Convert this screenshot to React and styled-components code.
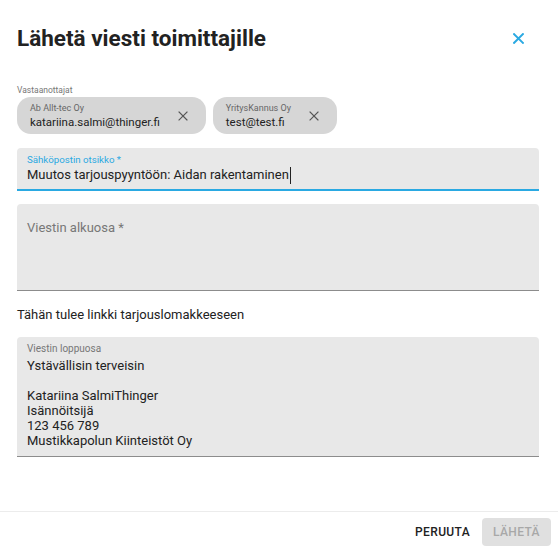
import React from 'react';
import styled, { createGlobalStyle } from 'styled-components';

const Global = createGlobalStyle`
  html, body { margin: 0; padding: 0; background: #fff; }
  body { font-family: Roboto, "Liberation Sans", sans-serif; color: #212121; }
`;

const Dialog = styled.div`
  height: 100vh;
  display: flex;
  flex-direction: column;
  box-sizing: border-box;
  background: #fff;
`;

const Header = styled.div`
  display: flex;
  align-items: center;
  justify-content: space-between;
  padding: 22px 30px 0 17px;
`;

const Title = styled.h2`
  margin: 0;
  font-size: 22.5px;
  line-height: 32px;
  font-weight: 700;
  color: #222;
`;

const CloseButton = styled.button`
  border: 0;
  background: none;
  padding: 0;
  width: 20px;
  height: 20px;
  display: flex;
  align-items: center;
  justify-content: center;
  color: #2aa9e2;
`;

const Content = styled.div`
  flex: 1;
  padding: 30px 19px 0 17px;
  display: flex;
  flex-direction: column;
`;

const SmallLabel = styled.div`
  font-size: 8.5px;
  line-height: 12px;
  color: #777;
`;

const ChipRow = styled.div`
  display: flex;
  gap: 7px;
  margin-top: 1px;
`;

const Chip = styled.div`
  display: flex;
  align-items: center;
  height: 37px;
  box-sizing: border-box;
  padding: 0 18px 0 13px;
  background: #d6d6d6;
  border-radius: 14px;
  gap: 18px;
`;

const ChipText = styled.div`
  display: flex;
  flex-direction: column;
`;

const ChipName = styled.span`
  font-size: 9px;
  line-height: 12px;
  color: #666;
`;

const ChipEmail = styled.span`
  font-size: 11.5px;
  line-height: 16px;
  color: #222;
`;

const ChipDelete = styled.span`
  display: flex;
  color: #555;
`;

const Field = styled.div`
  margin-top: ${p => p.$top}px;
  background: #e8e8e8;
  border-radius: 4px 4px 0 0;
  border-bottom: ${p => (p.$focused ? '2px solid #2aa9e2' : '1px solid #8c8c8c')};
  padding: ${p => p.$pad};
  min-height: ${p => p.$min || 0}px;
  box-sizing: border-box;
`;

const FieldLabel = styled.div`
  font-size: ${p => (p.$focused ? '9.7px' : '10px')};
  line-height: 10px;
  color: ${p => (p.$focused ? '#2aa9e2' : '#777')};
`;

const Value = styled.div`
  font-size: 13px;
  line-height: 20px;
  color: #222;
  display: flex;
  align-items: center;
`;

const Caret = styled.span`
  display: inline-block;
  width: 1px;
  height: 17px;
  background: #222;
  margin-left: 1px;
`;

const Placeholder = styled.div`
  font-size: 13px;
  line-height: 16px;
  color: #777;
`;

const Note = styled.p`
  margin: 16px 0 0;
  font-size: 13px;
  line-height: 16px;
  color: #222;
`;

const Lines = styled.div`
  margin-top: 4px;
  font-size: 13px;
  line-height: 15px;
  color: #222;
  white-space: pre-line;
`;

const Footer = styled.div`
  height: 39px;
  box-sizing: border-box;
  border-top: 1px solid #ececec;
  display: flex;
  align-items: center;
  justify-content: flex-end;
  gap: 4px;
  padding: 2px 7px 0 0;
`;

const Button = styled.button`
  font-family: Roboto, "Liberation Sans", sans-serif;
  font-size: 12px;
  font-weight: 500;
  letter-spacing: 0.03em;
  text-transform: uppercase;
  height: 28px;
  padding: 0 8px;
  border: 0;
  border-radius: 4px;
  background: ${p => (p.$disabled ? '#e0e0e0' : 'transparent')};
  color: ${p => (p.$disabled ? '#a8a8a8' : '#222')};
  min-width: ${p => (p.$disabled ? '69px' : 'auto')};
`;

const XIcon = ({ size = 10, stroke = 1.4 }) => (
  <svg width={size} height={size} viewBox="0 0 10 10">
    <path d="M1 1L9 9M9 1L1 9" stroke="currentColor" strokeWidth={stroke} strokeLinecap="square" fill="none" />
  </svg>
);

const recipients = [
  { name: 'Ab Allt-tec Oy', email: 'katariina.salmi@thinger.fi' },
  { name: 'YritysKannus Oy', email: 'test@test.fi' },
];

export default function App() {
  return (
    <>
      <Global />
      <Dialog>
        <Header>
          <Title>Lähetä viesti toimittajille</Title>
          <CloseButton>
            <XIcon size={11} stroke={1.8} />
          </CloseButton>
        </Header>
        <Content>
          <SmallLabel>Vastaanottajat</SmallLabel>
          <ChipRow>
            {recipients.map(r => (
              <Chip key={r.email}>
                <ChipText>
                  <ChipName>{r.name}</ChipName>
                  <ChipEmail>{r.email}</ChipEmail>
                </ChipText>
                <ChipDelete>
                  <XIcon size={10} stroke={1.1} />
                </ChipDelete>
              </Chip>
            ))}
          </ChipRow>

          <Field $top={14} $focused $pad="7px 10px 4px">
            <FieldLabel $focused>Sähköpostin otsikko *</FieldLabel>
            <Value>
              Muutos tarjouspyyntöön: Aidan rakentaminen<Caret />
            </Value>
          </Field>

          <Field $top={13} $pad="16px 10px 0" $min={87}>
            <Placeholder>Viestin alkuosa *</Placeholder>
          </Field>

          <Note>Tähän tulee linkki tarjouslomakkeeseen</Note>

          <Field $top={14} $pad="7px 10px 8px">
            <FieldLabel>Viestin loppuosa</FieldLabel>
            <Lines>
              {'Ystävällisin terveisin\n\nKatariina SalmiThinger\nIsännöitsijä\n123 456 789\nMustikkapolun Kiinteistöt Oy'}
            </Lines>
          </Field>
        </Content>
        <Footer>
          <Button>Peruuta</Button>
          <Button $disabled>Lähetä</Button>
        </Footer>
      </Dialog>
    </>
  );
}
